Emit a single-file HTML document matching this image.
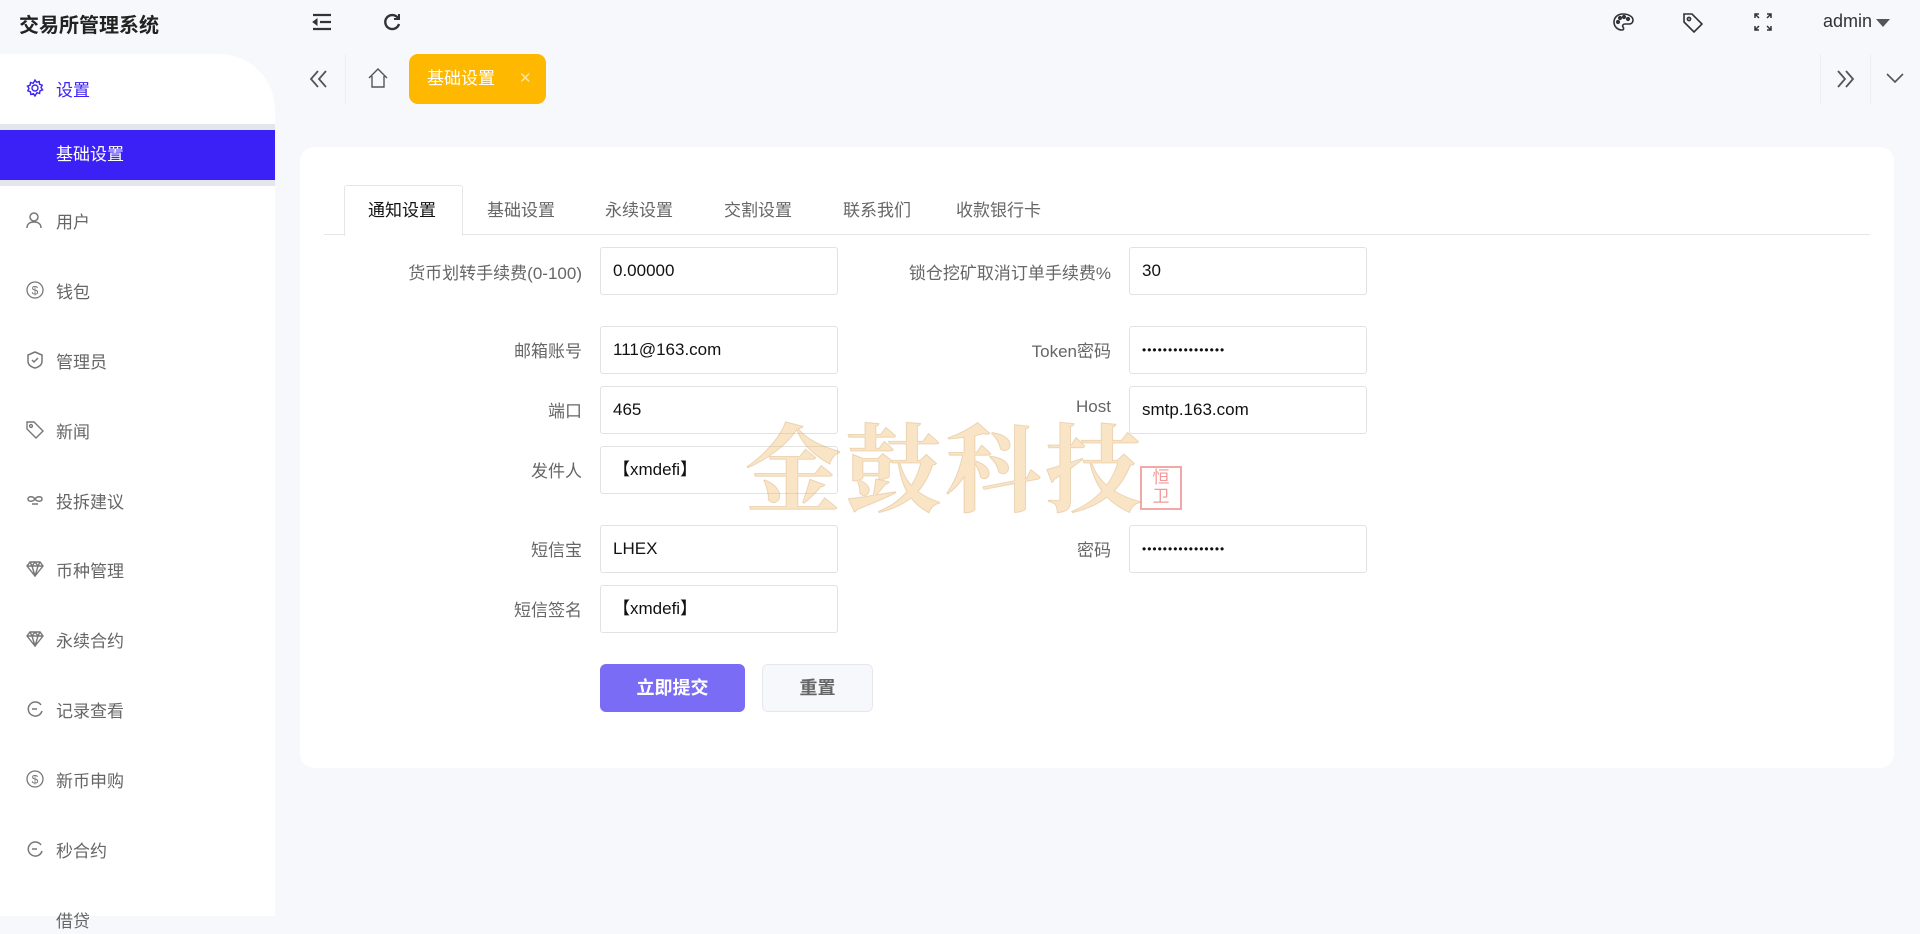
<!DOCTYPE html>
<html><head><meta charset="utf-8"><style>
*{box-sizing:border-box;margin:0;padding:0}
body{width:1920px;height:916px;overflow:hidden;background:#f7f8fc;font-family:"Liberation Sans","Noto Sans CJK SC",sans-serif;position:relative;color:#333}
.abs{position:absolute}
.title{left:19px;top:9px;font-size:20px;font-weight:bold;color:#222}
.side{left:0;top:54px;width:275px;height:862px;background:#fff;border-top-right-radius:56px}
.item{position:absolute;left:0;width:275px;height:30px;font-size:17px;color:#666;display:flex;align-items:center}
.item svg{position:absolute;left:26px}
.item span{position:absolute;left:56px}
.active{left:0;top:124px;width:275px;height:62px;background:#e4e6ee}
.active div{position:absolute;top:6px;left:0;width:275px;height:50px;background:#3c21f7;color:#fff;font-size:17px;line-height:50px;padding-left:56px}
.tag{left:409px;top:54px;width:137px;height:50px;background:#ffb800;border-radius:9px;color:#fff;font-size:17px;line-height:50px;padding-left:18px}
.card{left:300px;top:147px;width:1594px;height:621px;background:#fff;border-radius:14px}
.tabline{left:324px;top:234px;width:1546px;height:1px;background:#e6e6e6}
.tab{top:196px;font-size:17px;color:#666}
.acttab{left:344px;top:185px;width:119px;height:51px;background:#fff;border:1px solid #e6e6e6;border-bottom:none;border-radius:3px 3px 0 0}
.lbl{font-size:17px;color:#666;text-align:right;width:300px}
.inp{width:238px;height:48px;border:1px solid #e2e2e2;border-radius:3px;background:#fff;font-size:17px;color:#111;padding-left:12px;line-height:46px}
.btn1{left:600px;top:664px;width:145px;height:48px;background:#7b6cf6;border-radius:6px;color:#fff;font-weight:bold;font-size:18px;text-align:center;line-height:48px}
.btn2{left:762px;top:664px;width:111px;height:48px;background:#f7f8fc;border:1px solid #e6e8ee;border-radius:6px;color:#666;font-weight:bold;font-size:18px;text-align:center;line-height:46px}
.wm{left:745px;top:395px;font-size:96px;font-weight:bold;color:rgba(240,190,110,.4);letter-spacing:4px;font-family:"Noto Serif CJK SC",serif;-webkit-text-stroke:1px rgba(200,150,90,.3)}
</style></head><body>
<div class="abs title">交易所管理系统</div>
<svg class="abs" style="left:312px;top:13px" width="20" height="18" viewBox="0 0 20 18" fill="none" stroke="#333" stroke-width="2.2"><path d="M1 2h18M8 9h11M1 16h18"/><path d="M5 6l-4 3 4 3z" fill="#333" stroke-width="1"/></svg>
<svg class="abs" style="left:382px;top:12px" width="20" height="20" viewBox="0 0 20 20" fill="none" stroke="#333" stroke-width="2.4"><path d="M16 6A7 7 0 1 0 17 12"/><path d="M17 2v5h-5" stroke-width="2"/></svg>
<svg class="abs" style="left:1612px;top:12px" width="22" height="20" viewBox="0 0 22 20" fill="none" stroke="#333" stroke-width="1.6"><path d="M11 2C5 2 2 6 2 10c0 5 4 8 8 8 2 0 2-2 1-3s0-3 2-3h4c3 0 4-2 4-4 0-3-4-6-10-6z"/><circle cx="6" cy="10" r="1.3" fill="#333"/><circle cx="8" cy="6" r="1.3" fill="#333"/><circle cx="12" cy="5" r="1.3" fill="#333"/><circle cx="16" cy="7" r="1.3" fill="#333"/></svg>
<svg class="abs" style="left:1682px;top:12px" width="22" height="22" viewBox="0 0 22 22" fill="none" stroke="#333" stroke-width="1.6"><path d="M2 2h8l10 10-8 8L2 10z"/><circle cx="7" cy="7" r="1.6"/></svg>
<svg class="abs" style="left:1754px;top:13px" width="18" height="18" viewBox="0 0 18 18" fill="none" stroke="#333" stroke-width="1.5"><path d="M1 5V1h4M1 1l4 4M17 5V1h-4M17 1l-4 4M1 13v4h4M1 17l4-4M17 13v4h-4M17 17l-4-4"/></svg>
<div class="abs" style="left:1823px;top:11px;font-size:18px;color:#333">admin</div>
<svg class="abs" style="left:1876px;top:19px" width="14" height="8"><path d="M0 0h14L7 8z" fill="#555"/></svg>

<div class="abs side"></div>
<div class="item" style="top:73px;color:#3c21f7"><svg width="18" height="18" viewBox="0 0 18 18" fill="none" stroke="#3c21f7" stroke-width="1.4"><circle cx="9" cy="9" r="3"/><path d="M9 1l1.5 2.3 2.7-.8.4 2.7 2.6 1-1.2 2.4 1.6 2.3-2.6.9-.4 2.7-2.7-.8L9 17l-1.5-2.3-2.7.8-.4-2.7-2.6-1L3 9.4 1.5 7.1l2.6-.9.4-2.7 2.7.8z"/></svg><span>设置</span></div>
<div class="abs active"><div>基础设置</div></div>
<div class="item" style="top:205px"><svg width="16" height="18" viewBox="0 0 16 18" fill="none" stroke="#777" stroke-width="1.5"><circle cx="8" cy="6" r="4"/><path d="M1 17c0-4 3-6 7-6s7 2 7 6"/></svg><span>用户</span></div>
<div class="item" style="top:275px"><svg width="18" height="18" viewBox="0 0 18 18" fill="none" stroke="#777" stroke-width="1.3"><circle cx="9" cy="9" r="8"/><text x="9" y="13.5" font-size="12" text-anchor="middle" fill="#777" stroke="none">$</text></svg><span>钱包</span></div>
<div class="item" style="top:345px"><svg width="18" height="18" viewBox="0 0 18 18" fill="none" stroke="#777" stroke-width="1.5"><path d="M9 1l7 3v6c0 4-3 6-7 7-4-1-7-3-7-7V4z"/><path d="M6 9l2 2 4-4"/></svg><span>管理员</span></div>
<div class="item" style="top:415px"><svg width="18" height="18" viewBox="0 0 18 18" fill="none" stroke="#777" stroke-width="1.4"><path d="M1 1h7l9 9-7 7-9-9z"/><circle cx="5" cy="5" r="1.4"/></svg><span>新闻</span></div>
<div class="item" style="top:485px"><svg width="18" height="12" viewBox="0 0 18 12" fill="none" stroke="#777" stroke-width="1.5"><path d="M9 5c-2-3-7-3-7 0s5 3 7 0c2-3 7-3 7 0s-5 3-7 0M6 10h6"/></svg><span>投拆建议</span></div>
<div class="item" style="top:554px"><svg width="18" height="16" viewBox="0 0 18 16" fill="none" stroke="#777" stroke-width="1.4"><path d="M4 1h10l3 4-8 10L1 5zM1 5h16M6 5l3 10 3-10M4 1l2 4 3-4 3 4 2-4"/></svg><span>币种管理</span></div>
<div class="item" style="top:624px"><svg width="18" height="16" viewBox="0 0 18 16" fill="none" stroke="#777" stroke-width="1.4"><path d="M4 1h10l3 4-8 10L1 5zM1 5h16M6 5l3 10 3-10M4 1l2 4 3-4 3 4 2-4"/></svg><span>永续合约</span></div>
<div class="item" style="top:694px"><svg width="18" height="18" viewBox="0 0 18 18" fill="none" stroke="#777" stroke-width="1.5"><path d="M15 5A7 7 0 1 0 16 11"/><path d="M6 9h5"/></svg><span>记录查看</span></div>
<div class="item" style="top:764px"><svg width="18" height="18" viewBox="0 0 18 18" fill="none" stroke="#777" stroke-width="1.3"><circle cx="9" cy="9" r="8"/><text x="9" y="13.5" font-size="12" text-anchor="middle" fill="#777" stroke="none">$</text></svg><span>新币申购</span></div>
<div class="item" style="top:834px"><svg width="18" height="18" viewBox="0 0 18 18" fill="none" stroke="#777" stroke-width="1.5"><path d="M15 5A7 7 0 1 0 16 11"/><path d="M6 9h5"/></svg><span>秒合约</span></div>
<div class="item" style="top:904px"><span>借贷</span></div>

<svg class="abs" style="left:309px;top:70px" width="20" height="18" viewBox="0 0 20 18" fill="none" stroke="#555" stroke-width="1.8"><path d="M9 1L2 9l7 8M17 1l-7 8 7 8"/></svg>
<div class="abs" style="left:345px;top:54px;width:1px;height:50px;background:#eceef2"></div>
<svg class="abs" style="left:368px;top:68px" width="20" height="20" viewBox="0 0 20 20" fill="none" stroke="#555" stroke-width="1.4"><path d="M1 10L10 1l9 9M4 8v11h12V8"/></svg>
<div class="abs tag">基础设置<span style="position:absolute;left:110px;font-size:15px;color:#ffe2a0">✕</span></div>
<div class="abs" style="left:1820px;top:54px;width:1px;height:50px;background:#eceef2"></div>
<div class="abs" style="left:1870px;top:54px;width:1px;height:50px;background:#eceef2"></div>
<svg class="abs" style="left:1836px;top:70px" width="20" height="18" viewBox="0 0 20 18" fill="none" stroke="#555" stroke-width="1.8"><path d="M2 1l7 8-7 8M10 1l7 8-7 8"/></svg>
<svg class="abs" style="left:1886px;top:73px" width="18" height="10" viewBox="0 0 18 10" fill="none" stroke="#555" stroke-width="1.6"><path d="M1 1l8 8 8-8"/></svg>

<div class="abs card"></div>
<div class="abs tabline"></div>
<div class="abs acttab"></div>
<div class="abs tab" style="left:368px;color:#111">通知设置</div>
<div class="abs tab" style="left:487px">基础设置</div>
<div class="abs tab" style="left:605px">永续设置</div>
<div class="abs tab" style="left:724px">交割设置</div>
<div class="abs tab" style="left:843px">联系我们</div>
<div class="abs tab" style="left:956px">收款银行卡</div>

<div class="abs lbl" style="left:282px;top:259px">货币划转手续费(0-100)</div>
<div class="abs inp" style="left:600px;top:247px">0.00000</div>
<div class="abs lbl" style="left:811px;top:259px">锁仓挖矿取消订单手续费%</div>
<div class="abs inp" style="left:1129px;top:247px">30</div>

<div class="abs lbl" style="left:282px;top:337px">邮箱账号</div>
<div class="abs inp" style="left:600px;top:326px">111@163.com</div>
<div class="abs lbl" style="left:811px;top:337px">Token密码</div>
<div class="abs inp" style="left:1129px;top:326px;font-size:12px;letter-spacing:1px">••••••••••••••••</div>

<div class="abs lbl" style="left:282px;top:397px">端口</div>
<div class="abs inp" style="left:600px;top:386px">465</div>
<div class="abs lbl" style="left:811px;top:397px">Host</div>
<div class="abs inp" style="left:1129px;top:386px">smtp.163.com</div>

<div class="abs lbl" style="left:282px;top:457px">发件人</div>
<div class="abs inp" style="left:600px;top:446px">【xmdefi】</div>

<div class="abs lbl" style="left:282px;top:536px">短信宝</div>
<div class="abs inp" style="left:600px;top:525px">LHEX</div>
<div class="abs lbl" style="left:811px;top:536px">密码</div>
<div class="abs inp" style="left:1129px;top:525px;font-size:12px;letter-spacing:1px">••••••••••••••••</div>

<div class="abs lbl" style="left:282px;top:596px">短信签名</div>
<div class="abs inp" style="left:600px;top:585px">【xmdefi】</div>

<div class="abs btn1">立即提交</div>
<div class="abs btn2">重置</div>

<div class="abs wm">金鼓科技</div>
<div class="abs" style="left:1140px;top:466px;width:42px;height:44px;border:2px solid rgba(235,110,110,.6);color:rgba(235,110,110,.7);font-size:17px;line-height:19px;text-align:center">恒<br>卫</div>
</body></html>
